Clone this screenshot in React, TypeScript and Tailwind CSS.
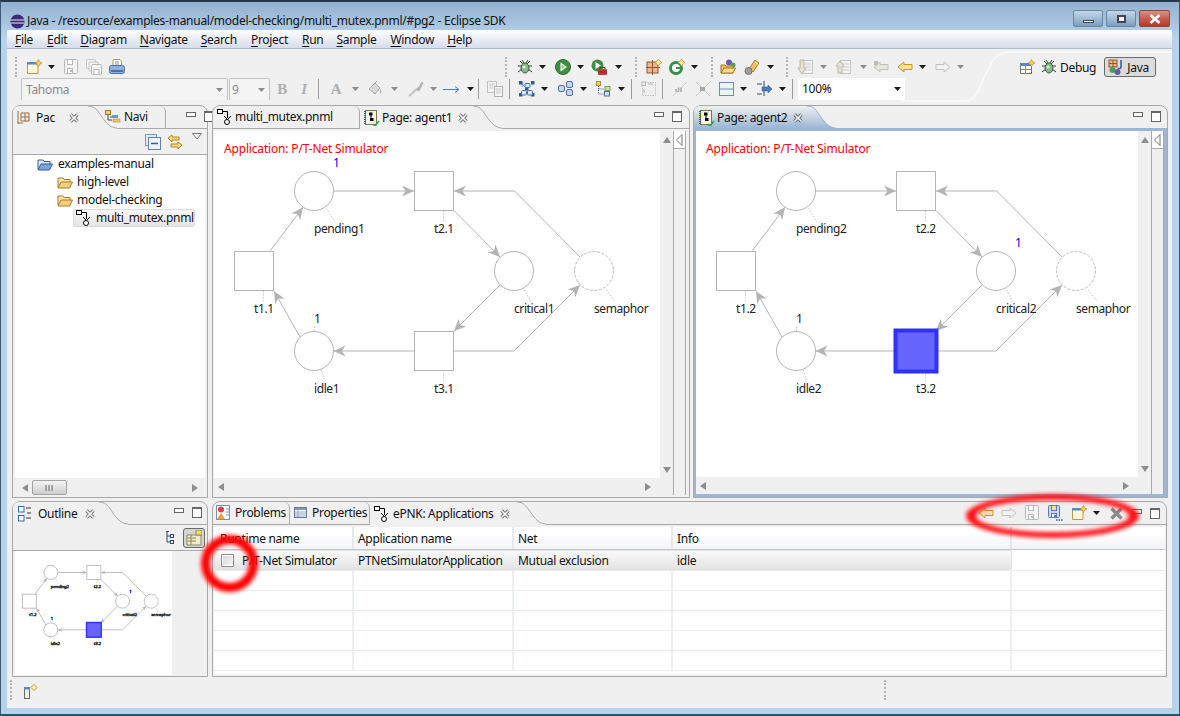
import React from "react";

type P = { className?: string };
const Ic = ({ children, className = "" }: { children: React.ReactNode; className?: string }) => (
  <svg width="16" height="16" viewBox="0 0 16 16" className={`shrink-0 ${className}`}>{children}</svg>
);
const Drop = ({ className = "", gray = false }: P & { gray?: boolean }) => (
  <svg width="7" height="4" viewBox="0 0 7 4" className={`shrink-0 ${className}`}>
    <path d="M0 0H7L3.5 4Z" fill={gray ? "#8c8c8c" : "#1a1a1a"} />
  </svg>
);
const Grip = ({ className = "" }: P) => <div className={`h-[20px] w-[2px] border-l-2 border-dotted border-[#b4b4b4] ${className}`} />;
const Sep = ({ className = "" }: P) => <div className={`h-[20px] w-px bg-[#9a9a9a] ${className}`} />;

const NewIc = ({ className = "" }: P) => (
  <Ic className={className}>
    <path d="M1.5 3.5H12V14.5H1.5Z" fill="#fdf7dc" stroke="#b89a50" />
    <rect x="1" y="3" width="11" height="2.5" fill="#5b86c0" />
    <path d="M12.5 0.5L14 3L16 4L14 5L12.5 7.5L11 5L9 4L11 3Z" fill="#f5cf4a" stroke="#b48a20" strokeWidth=".6" />
  </Ic>
);
const Floppy = ({ className = "", c = "#b8b8b8", fill = "#f4f4f4", dots = false }: P & { c?: string; fill?: string; dots?: boolean }) => (
  <Ic className={className}>
    <rect x="1.5" y="0.5" width={dots ? 11 : 13} height={dots ? 12 : 14} rx="1" fill={fill} stroke={c} />
    <rect x="4.5" y="0.5" width="5" height="5" fill={dots ? "#f4dfa0" : "#fff"} stroke={c} />
    <rect x="4.5" y={dots ? 8.5 : 9.5} width="5" height={dots ? 4 : 5} fill="#fff" stroke={c} />
    <rect x="7" y={dots ? 10 : 11} width="2" height="2" fill={c} />
    {dots && <path d="M9 15H10.5M11.5 15H13M14 15H15.5" stroke="#3a5fa0" strokeWidth="1.6" />}
  </Ic>
);
const FloppyAll = ({ className = "" }: P) => (
  <Ic className={className}>
    <rect x="0.5" y="0.5" width="9" height="9" rx="1" fill="#f4f4f4" stroke="#c4c4c4" />
    <rect x="3" y="3" width="9" height="9" rx="1" fill="#f4f4f4" stroke="#c4c4c4" />
    <rect x="5.5" y="5.5" width="10" height="10" rx="1" fill="#f4f4f4" stroke="#b4b4b4" />
    <rect x="8" y="10.5" width="5" height="5" fill="#fff" stroke="#b4b4b4" />
  </Ic>
);
const PrintIc = ({ className = "" }: P) => (
  <Ic className={className}>
    <path d="M5 .5H11L12.5 2V7H4V1Z" fill="#fff" stroke="#b09a60" />
    <rect x="0.5" y="6.5" width="15" height="8" rx="2" fill="#8fb0dc" stroke="#4a70a8" />
    <rect x="2" y="11" width="12" height="2" fill="#4a70a8" />
    <path d="M6 3H10M6 5H10" stroke="#7a90b0" />
  </Ic>
);
const Letter = ({ t, className = "", serif = true, it = false }: P & { t: string; serif?: boolean; it?: boolean }) => (
  <div className={`flex h-[16px] w-[16px] shrink-0 items-center justify-center text-[15px] font-bold text-[#aeaeae] ${className} ${serif ? "font-['Liberation_Serif',serif]" : ""} ${it ? "italic" : ""}`}>{t}</div>
);
const Bucket = ({ className = "" }: P) => (
  <Ic className={className}>
    <path d="M2 8L8 2L13 7L8 13Z" fill="#d8d8d8" stroke="#a8a8a8" />
    <path d="M13 8C15 10 15 13 14 13C13 13 12.5 10 13 8Z" fill="#bcbcbc" />
    <path d="M8 2L10 0" stroke="#a0a0a0" />
  </Ic>
);
const Pen = ({ className = "" }: P) => (
  <Ic className={className}>
    <path d="M1 15L10 7" stroke="#c4c4c4" strokeWidth="2" />
    <path d="M9 9L14 1L15 2L11 10Z" fill="#b8b8b8" stroke="#a0a0a0" strokeWidth=".6" />
  </Ic>
);
const LineArrow = ({ className = "" }: P) => (
  <svg width="17" height="16" viewBox="0 0 17 16" className={`shrink-0 ${className}`}>
    <path d="M0 8.5H15M12 5.5L16 8.5L12 11.5" stroke="#4c78c0" fill="none" />
  </svg>
);
const CopyFmt = ({ className = "" }: P) => (
  <Ic className={className}>
    <rect x=".5" y=".5" width="9" height="11" fill="#f6f6f6" stroke="#c0c0c0" />
    <rect x="7.5" y="5.5" width="8" height="10" fill="#f6f6f6" stroke="#b0b0b0" />
    <path d="M2 3H8M2 5H6M2 7H6M9 8H14M9 10H14M9 12H14" stroke="#c8c8c8" />
  </Ic>
);
const LayoutAll = ({ className = "" }: P) => (
  <Ic className={className}>
    <path d="M2 2L14 14M5 3H3V6" stroke="#88a4cc" fill="none" />
    {[[0, 0], [12, 0], [0, 12], [12, 12], [6, 6]].map(([x, y], i) => <rect key={i} x={x} y={y} width="3.5" height="3.5" fill="#2f5a96" />)}
    <rect x="2.5" y="9.5" width="5" height="4.5" rx="1" fill="#dbe6f4" stroke="#4a70a8" />
    <rect x="8.5" y="9.5" width="5" height="4.5" rx="1" fill="#dbe6f4" stroke="#4a70a8" />
    <rect x="6" y="2.5" width="5" height="4" rx="1" fill="#dbe6f4" stroke="#4a70a8" />
  </Ic>
);
const TwoBox = ({ className = "" }: P) => (
  <Ic className={className}>
    <rect x="0.5" y="4.5" width="6" height="6" rx="1.5" fill="#c8d8f0" stroke="#4a70a8" />
    <rect x="8.5" y="0.5" width="6" height="6" rx="1.5" fill="#c8d8f0" stroke="#4a70a8" />
    <rect x="8.5" y="8.5" width="6" height="6" rx="1.5" fill="#c8d8f0" stroke="#4a70a8" />
  </Ic>
);
const TreeBox = ({ className = "" }: P) => (
  <Ic className={className}>
    <rect x=".5" y=".5" width="4" height="4" fill="#f0d080" stroke="#b08a30" />
    <path d="M2.5 5V13H8M2.5 8H8" stroke="#2f5a96" strokeDasharray="1 1" fill="none" />
    <rect x="9" y="5.5" width="5" height="4" fill="#c8dca0" stroke="#80a060" />
    <rect x="8.5" y="10.5" width="5" height="4.5" fill="#d0e0f4" stroke="#4a70a8" />
  </Ic>
);
const DashBox = ({ className = "" }: P) => (
  <Ic className={className}>
    <rect x="1.5" y="1.5" width="13" height="13" fill="none" stroke="#c0c0c0" strokeDasharray="1.5 1" />
    <rect x="1" y="1" width="3.5" height="3.5" fill="#f0f0f0" stroke="#b8b8b8" />
    <path d="M7 3H12M3 8V12" stroke="#b0b0b0" />
  </Ic>
);
const Diag1 = ({ className = "" }: P) => (
  <Ic className={className}>
    <path d="M1 15L15 1" stroke="#cfcfcf" />
    <path d="M4 8V11M6.5 6.5V11M9 6.5V11" stroke="#a8a8a8" strokeWidth="1.5" />
  </Ic>
);
const Diag2 = ({ className = "" }: P) => (
  <Ic className={className}>
    <path d="M1 1L15 15M1 15L15 1" stroke="#c4c4c4" />
    <rect x="5" y="6" width="5" height="4" fill="#a8a8a8" />
  </Ic>
);
const SplitBox = ({ className = "" }: P) => (
  <Ic className={className}>
    <rect x=".5" y="1.5" width="14" height="13" fill="#eef4fb" stroke="#6a8cbc" />
    <path d="M1 8H14" stroke="#6a8cbc" />
  </Ic>
);
const Arrows = ({ className = "" }: P) => (
  <Ic className={className}>
    <path d="M0 3H5M0 13H5M7 0V15" stroke="#2f4a70" fill="none" />
    <path d="M5 6H11V4L15 8L11 12V10H5Z" fill="#4a7ab8" stroke="#2f5a96" strokeWidth=".5" />
  </Ic>
);
const Bug = ({ className = "", size = 16 }: P & { size?: number }) => (
  <svg width={size} height={size} viewBox="0 0 16 16" className={`shrink-0 ${className}`}>
    <path d="M3 2L6 5M13 2L10 5M1 7H5M15 7H11M1 13L5 10M15 13L11 10M5 1L7 4M11 1L9 4" stroke="#25452f" />
    <ellipse cx="8" cy="9" rx="4" ry="5" fill="#8ab88a" stroke="#38603f" />
    <circle cx="7" cy="8" r="1.6" fill="#d8ecd8" />
  </svg>
);
const Run = ({ className = "" }: P) => (
  <Ic className={className}>
    <circle cx="8" cy="8" r="7.5" fill="#3c9040" />
    <circle cx="8" cy="8" r="7.5" fill="none" stroke="#2a6e30" />
    <path d="M5.5 3.5L12 8L5.5 12.5Z" fill="#fff" />
    <path d="M6.5 5.5L10 8L6.5 10.5Z" fill="#8cc88c" />
  </Ic>
);
const RunExt = ({ className = "" }: P) => (
  <Ic className={className}>
    <circle cx="6.5" cy="6.5" r="6" fill="#3c9040" />
    <path d="M4.5 3L10 6.5L4.5 10Z" fill="#fff" />
    <rect x="7" y="10" width="9" height="6" rx="1" fill="#c83838" />
    <path d="M9 10V8.5H14V10M7 13H16" stroke="#8c1818" fill="none" />
  </Ic>
);
const GridStar = ({ className = "" }: P) => (
  <Ic className={className}>
    <rect x="1" y="3" width="11" height="11" fill="#e8b890" stroke="#94582c" />
    <path d="M6.5 1V16M0 8.5H14" stroke="#94582c" />
    <path d="M12.5 0L14 2L16 3.5L14 5L12.5 7L11 5L9 3.5L11 2Z" fill="#f5e6a0" stroke="#b89428" strokeWidth=".7" />
  </Ic>
);
const GStar = ({ className = "" }: P) => (
  <Ic className={className}>
    <circle cx="7" cy="9" r="5.5" fill="#fff" stroke="#389048" strokeWidth="3" />
    <path d="M7 9H12" stroke="#389048" strokeWidth="2" />
    <path d="M12.5 0L14 2L16 3.5L14 5L12.5 7L11 5L9 3.5L11 2Z" fill="#f5e6a0" stroke="#b89428" strokeWidth=".7" />
  </Ic>
);
const FolderMix = ({ className = "" }: P) => (
  <Ic className={className}>
    <circle cx="9" cy="3.5" r="3" fill="#6a5ca8" />
    <circle cx="13" cy="6" r="2.5" fill="#48a058" />
    <path d="M1 6H5L6 7H13V14H1Z" fill="#f0c068" stroke="#a87820" />
    <path d="M1 14L4 9H15.5L13 14Z" fill="#f8dc90" stroke="#a87820" />
  </Ic>
);
const Torch = ({ className = "" }: P) => (
  <Ic className={className}>
    <path d="M5 10L11 1L15 4L9 13Z" fill="#f0c060" stroke="#b08020" />
    <path d="M11 3L14 5" stroke="#fff" />
    <circle cx="4.5" cy="12" r="3.5" fill="#a0a0a0" stroke="#707070" />
  </Ic>
);
const NavDown = ({ className = "", up = false }: P & { up?: boolean }) => (
  <Ic className={className}>
    <rect x="5.5" y="1.5" width="10" height="13" fill="#f4f4f4" stroke="#c4c4c4" />
    <path d="M8 5H14M8 8H14M8 11H14" stroke="#c8c8c8" />
    {up ? <path d="M1 7L5 2L9 7H7V14H3V7Z" fill="#e6e2d2" stroke="#b8b6a8" /> : <path d="M3 1H7V9H9L5 15L1 9H3Z" fill="#e6e2d2" stroke="#b8b6a8" />}
  </Ic>
);
const ArrowL = ({ className = "", c = "#f8e0a0", s = "#c89818", dot = false }: P & { c?: string; s?: string; dot?: boolean }) => (
  <Ic className={className}>
    <path d="M1 8L7 3V5.5H15V10.5H7V13Z" fill={c} stroke={s} />
    {dot && <rect x="1" y="2" width="4" height="4" fill="#bbb" />}
  </Ic>
);
const ArrowR = ({ className = "" }: P) => (
  <Ic className={className}>
    <path d="M15 8L9 3V5.5H1V10.5H9V13Z" fill="#f2f2f2" stroke="#c0c0c0" />
  </Ic>
);
const NewPersp = ({ className = "" }: P) => (
  <Ic className={className}>
    <rect x="1.5" y="4.5" width="11" height="10" fill="#fff" stroke="#7a7a50" />
    <rect x="1" y="4" width="12" height="3" fill="#5b86c0" />
    <path d="M6.5 7V15M2 10.5H12" stroke="#888" />
    <path d="M12.5 0.5L14 3L16 4L14 5L12.5 7.5L11 5L9 4L11 3Z" fill="#f5cf4a" stroke="#b48a20" strokeWidth=".6" />
  </Ic>
);
const JavaP = ({ className = "" }: P) => (
  <Ic className={className}>
    <rect x="1" y="1" width="8" height="7" fill="#e8b890" stroke="#94582c" />
    <path d="M5 1V8M1 4.5H9" stroke="#94582c" />
    <circle cx="4.5" cy="11" r="3" fill="#48a058" />
    <circle cx="9.5" cy="13" r="3" fill="#6a5ca8" />
    <path d="M13 1V8C13 10 11 10 10 9" stroke="#2f5a96" strokeWidth="1.5" fill="none" />
  </Ic>
);

const FileIc = ({ className = "" }: P) => (
  <Ic className={className}>
    <rect x="0.5" y="0.5" width="5" height="4" fill="#fff" stroke="#000" />
    <path d="M5.5 2.5H10.5V9M7 7L10.5 10.5L14 7" fill="none" stroke="#000" />
    <circle cx="10" cy="13" r="2.5" fill="#fff" stroke="#000" />
  </Ic>
);
const PageIc = ({ className = "" }: P) => (
  <Ic className={className}>
    <rect x="1.5" y="0.5" width="11" height="14" fill="#f6f4e4" stroke="#7a7a40" />
    <path d="M1 1V15" stroke="#2f5a96" strokeWidth="2" strokeDasharray="1 1" />
    <rect x="5" y="2.5" width="3.5" height="3" fill="#000" />
    <rect x="6" y="8" width="3.5" height="3" fill="#000" />
    <path d="M7 5V8" stroke="#000" />
    <path d="M9 14L11 16L15 11" stroke="#38a048" strokeWidth="1.6" fill="none" />
  </Ic>
);
const PacIc = ({ className = "" }: P) => (
  <Ic className={className}>
    <path d="M2 1V14M5 3H13V11H5ZM9 3V11M5 7H13M2 13H7" stroke="#9c6a38" fill="none" />
  </Ic>
);
const NaviIc = ({ className = "" }: P) => (
  <Ic className={className}>
    <rect x=".5" y="1.5" width="5" height="4" fill="#f0d080" stroke="#9c7a20" />
    <path d="M3 6V11H7M5 8H9" stroke="#444" fill="none" />
    <rect x="7" y="6" width="6" height="3" fill="#7098c8" />
    <rect x="8" y="10" width="7" height="3" fill="#f0c868" stroke="#9c7a20" strokeWidth=".5" />
  </Ic>
);
const OutlineIc = ({ className = "" }: P) => (
  <Ic className={className}>
    <rect x=".5" y=".5" width="5.5" height="5.5" fill="#fff" stroke="#2f6ab8" />
    <rect x=".5" y="9.5" width="5.5" height="5.5" fill="#fff" stroke="#2f6ab8" />
    <path d="M8 2H13M9 7H13M8 12H13" stroke="#333" />
  </Ic>
);
const ProblemsIc = ({ className = "" }: P) => (
  <Ic className={className}>
    <rect x=".5" y=".5" width="13" height="14" fill="#fff" stroke="#8090b0" />
    <circle cx="5" cy="4.5" r="3" fill="#e04040" />
    <path d="M5 8L9 14H1Z" fill="#f0a030" />
    <path d="M10 4H13M10 7H13M10 10H13" stroke="#8090b0" />
  </Ic>
);
const PropsIc = ({ className = "" }: P) => (
  <Ic className={className}>
    <rect x=".5" y="2.5" width="12" height="10" fill="#fff" stroke="#5f7f9f" />
    <rect x="1" y="3" width="11" height="2" fill="#7a9ac0" />
    <path d="M1 7H12M1 9H12M1 11H12M4 5V12" stroke="#90a8c0" />
  </Ic>
);
const Close = ({ className = "", strong = false }: P & { strong?: boolean }) => (
  <svg width="10" height="10" viewBox="0 0 10 10" className={`shrink-0 ${className}`}>
    <path d="M1.5 1.5L8.5 8.5M8.5 1.5L1.5 8.5" stroke={strong ? "#55606e" : "#6e6e6e"} strokeWidth="3.2" />
    <path d="M1.5 1.5L8.5 8.5M8.5 1.5L1.5 8.5" stroke="#fff" strokeWidth="1.6" />
  </svg>
);
const MinMax = ({ className = "" }: P) => (
  <div className={`flex shrink-0 items-start gap-[8px] ${className}`}>
    <div className="mt-[1px] h-[5px] w-[10px] border border-[#666] bg-white" />
    <div className="h-[11px] w-[10px] border border-[#666] border-t-2 bg-white" />
  </div>
);
const Curve = ({ blue = false, className = "" }: P & { blue?: boolean }) => (
  <svg width="32" height="23" viewBox="0 0 32 23" className={`-mb-px shrink-0 ${className}`}>
    <defs>
      <linearGradient id="tabg" x1="0" x2="0" y1="0" y2="1">
        <stop offset="0" stopColor="#f0f0f0" />
        <stop offset="1" stopColor="#99b4d3" />
      </linearGradient>
    </defs>
    <path d="M0 23V0H3C12 0 14 8 20 15C24 20 28 22 32 22V23Z" fill={blue ? "url(#tabg)" : "#f0f0f0"} />
    <path d="M3 0C12 0 14 8 20 15C24 20 28 22 32 22" fill="none" stroke={blue ? "#9bb2cc" : "#a9a9a9"} />
  </svg>
);

const font = "font-['Noto_Sans',sans-serif] tracking-[-0.3px]";

const Marker = ({ id }: { id: string }) => (
  <defs>
    <marker id={id} markerUnits="userSpaceOnUse" markerWidth="14" markerHeight="14" refX="12" refY="7" orient="auto">
      <path d="M0 1.5L12 7L0 12.5L3.5 7Z" fill="#b4b4b4" />
    </marker>
  </defs>
);

function Net({ n, hot, token, id, viewBox, mini = false, className = "" }: { n: string; hot?: boolean; token: "pending" | "critical"; id: string; viewBox?: string; mini?: boolean; className?: string }) {
  const s = "#b4b4b4";
  const m = `url(#${id})`;
  const sw = mini ? 2.4 : 1;
  const Lbl = ({ x, y, t, fill = "#222" }: { x: number; y: number; t: string; fill?: string }) => (
    <text x={x} y={y} fill={fill} fontSize="12" letterSpacing="-0.4" stroke={mini ? fill : undefined} strokeWidth={mini ? 1.2 : undefined}>{t}</text>
  );
  const Circle = ({ cx, cy, dash }: { cx: number; cy: number; dash?: boolean }) => (
    <circle cx={cx} cy={cy} r="19.5" fill="#fff" strokeWidth={sw} stroke={dash ? "#bcbcbc" : s} strokeDasharray={dash && !mini ? "3 1.5" : undefined} />
  );
  return (
    <svg viewBox={viewBox} className={`block font-['Noto_Sans',sans-serif] ${className}`}>
      <Marker id={id} />
      <g fill="none" stroke={s} strokeWidth={sw}>
        <path d="M119.5 60H200" markerEnd={m} />
        <path d="M240 79.5L286 126" markerEnd={m} />
        <path d="M286 154L240 200" markerEnd={m} />
        <path d="M200 220H119.5" markerEnd={m} />
        <path d="M86 206L60 160" markerEnd={m} />
        <path d="M56.3 119.7L89 76.3" markerEnd={m} />
        <path d="M366 126L300.7 60H240" markerEnd={m} />
        <path d="M240 220H300L366 154" markerEnd={m} />
      </g>
      <g stroke="#c4c4c4" strokeWidth={sw} strokeDasharray="1.5 1.5" fill="none">
        <path d="M112.3 77.3L120.7 90.7M229.5 79.5V90M310.7 159L316.7 170.7M392.3 159L401.3 170.7M49.5 160V170M107.3 239L110.7 250.7M100.5 200V194M229.5 243V250" />
      </g>
      <Circle cx={100} cy={60} />
      <Circle cx={300} cy={140} />
      <Circle cx={380} cy={140} dash />
      <Circle cx={100} cy={220} />
      <rect x="200.5" y="40.5" width="39" height="39" fill="#fff" stroke={s} strokeWidth={sw} />
      <rect x="20.5" y="120.5" width="39" height="39" fill="#fff" stroke={s} strokeWidth={sw} />
      {hot ? (
        <rect x="199.5" y="199.5" width="41" height="41" fill="#6666ff" stroke="#3030ff" strokeWidth="4" />
      ) : (
        <rect x="200.5" y="200.5" width="39" height="39" fill="#fff" stroke={s} />
      )}
      {!mini && <text x="10" y="22" fill="#ff0000" fontSize="12" letterSpacing="-0.17">Application: P/T-Net Simulator</text>}
      <Lbl x={100} y={102} t={`pending${n}`} />
      <Lbl x={220} y={102} t={`t2.${n}`} />
      <Lbl x={300} y={182} t={`critical${n}`} />
      <Lbl x={380} y={182} t="semaphor" />
      <Lbl x={40} y={182} t={`t1.${n}`} />
      <Lbl x={100} y={192} t="1" />
      <Lbl x={100} y={262} t={`idle${n}`} />
      <Lbl x={220} y={262} t={`t3.${n}`} />
      {token === "pending" ? <Lbl x={119} y={36} t="1" fill="#0000ff" /> : <Lbl x={319} y={116} t="1" fill="#0000ff" />}
    </svg>
  );
}

const Tri = ({ d, className = "" }: P & { d: "l" | "r" | "u" | "d" }) => {
  const p = { l: "M7 0V8L1 4Z", r: "M1 0V8L7 4Z", u: "M0 7H8L4 1Z", d: "M0 1H8L4 7Z" }[d];
  return (
    <svg width="8" height="8" viewBox="0 0 8 8" className={`shrink-0 ${className}`}>
      <path d={p} fill="#8e8e8e" />
    </svg>
  );
};

function EditorBody({ n, hot, token, id }: { n: string; hot?: boolean; token: "pending" | "critical"; id: string }) {
  return (
    <div className="flex min-h-0 flex-1">
      <div className="flex min-w-0 flex-1 flex-col">
        <Net n={n} hot={hot} token={token} id={id} className="min-h-0 w-full flex-1 bg-white" />
        <div className="flex h-[17px] shrink-0 items-center justify-between bg-[#f0f0f0] pl-[3px] pr-[8px]">
          <Tri d="l" />
          <Tri d="r" />
        </div>
      </div>
      <div className="flex w-[13px] shrink-0 flex-col items-center justify-between bg-[#f0f0f0] pb-[21px] pt-[5px]">
        <Tri d="u" />
        <Tri d="d" />
      </div>
      <div className="w-[13px] shrink-0 border-x border-[#a9a9a9] bg-[#f0f0f0]">
        <div className="flex h-[18px] items-center justify-center border-b border-[#a9a9a9] bg-white">
          <svg width="7" height="12" viewBox="0 0 7 12"><path d="M6 .5V11.5L.5 6Z" fill="#fff" stroke="#777" /></svg>
        </div>
      </div>
    </div>
  );
}

const Header = ({ children, blue = false }: { children: React.ReactNode; blue?: boolean }) => (
  <div className={`flex h-[23px] shrink-0 items-stretch border-b ${blue ? "border-[#9bb6d6]" : "border-[#a9a9a9]"}`}>{children}</div>
);
const ActiveTab = ({ icon, label, blue = false, className = "", closeCls = "" }: { icon: React.ReactNode; label: string; blue?: boolean; className?: string; closeCls?: string }) => (
  <>
    <div className={`-mb-px flex h-[23px] shrink-0 items-center rounded-tl-[6px] ${blue ? "bg-gradient-to-b from-[#f0f0f0] to-[#99b4d3]" : "bg-[#f0f0f0]"} ${className}`}>
      {icon}
      <span className="whitespace-nowrap">{label}</span>
      <Close strong={blue} className={closeCls} />
    </div>
    <Curve blue={blue} />
  </>
);
const InactiveTab = ({ icon, label, className = "" }: { icon: React.ReactNode; label: string; className?: string }) => (
  <div className={`flex shrink-0 items-center rounded-tr-[6px] border-r border-[#a9a9a9] ${className}`}>
    {icon}
    <span className="whitespace-nowrap">{label}</span>
  </div>
);

const cols = ["w-[140px]", "w-[160px]", "w-[159px]", "w-[339px]", "flex-1"];
const TableHeader = () => (
  <div className="flex h-[23px] shrink-0 border-b border-[#c8c8c8] bg-gradient-to-b from-white from-30% to-[#f2f3f6]">
    {["Runtime name", "Application name", "Net", "Info", ""].map((t, i) => (
      <div key={i} className={`${cols[i]} border-r-2 border-[#e8e8ea] ${i === 0 ? "pl-[6px]" : "pl-[4px]"} flex items-center pt-[2px] last:border-r-0`}>{t}</div>
    ))}
  </div>
);
const TableRow = () => (
  <div className="flex h-[20px] shrink-0 border-b border-[#ececec]">
    {cols.map((c, i) => <div key={i} className={`${c} border-r-2 border-[#edf0f3] last:border-r-0`} />)}
  </div>
);

const tool = "flex h-[22px] items-center";

export default function App() {
  return (
    <div className={`relative flex h-[716px] w-[1180px] flex-col overflow-hidden border-x border-b-2 border-t-2 border-b-[#1a5a6a] border-x-[#3a5a78] border-t-[#27384a] bg-gradient-to-b from-[#93b1cf] from-0% to-[#b7d2eb] to-[5%] pb-[6px] pl-[6px] pr-[7px] pt-[28px] text-[12px] text-[#111] ${font}`}>
      {/* title bar */}
      <div className="absolute left-[9px] top-[10px] flex items-center gap-[1px]">
        <svg width="15" height="15" viewBox="0 0 15 15">
          <circle cx="7.5" cy="7.5" r="7" fill="#3a2a78" />
          <path d="M0.5 6H14.5M1 9H14" stroke="#f0f0f8" strokeWidth="1.2" />
        </svg>
        <span className="ml-[1px] whitespace-nowrap tracking-[-0.27px] text-[#111]">Java - /resource/examples-manual/model-checking/multi_mutex.pnml/#pg2 - Eclipse SDK</span>
      </div>
      <div className="absolute right-[9px] top-[8px] flex gap-[3px]">
        <div className="flex h-[17px] w-[30px] items-center justify-center rounded-[2px] border border-[#6a86a4] bg-gradient-to-b from-[#c3d5e8] via-[#a2bcd6] to-[#7f9dbd]"><div className="mt-[5px] h-[3px] w-[11px] border border-[#445] bg-white" /></div>
        <div className="flex h-[17px] w-[30px] items-center justify-center rounded-[2px] border border-[#6a86a4] bg-gradient-to-b from-[#c3d5e8] via-[#a2bcd6] to-[#7f9dbd]"><div className="h-[8px] w-[9px] border-2 border-[#445] bg-white" /></div>
        <div className="flex h-[17px] w-[31px] items-center justify-center rounded-[2px] border border-[#8a4a44] bg-gradient-to-b from-[#dc8f84] via-[#c75f50] to-[#b03828]">
          <svg width="12" height="10" viewBox="0 0 12 10"><path d="M1.5 1L10.5 9M10.5 1L1.5 9" stroke="#fff" strokeWidth="2.6" /></svg>
        </div>
      </div>

      {/* menu */}
      <div className="flex h-[19px] shrink-0 items-center border-b border-[#b4bccc] bg-gradient-to-b from-white to-[#d6dcec] pt-[2px]">
        {[["File", "ml-[8px]"], ["Edit", "ml-[14px]"], ["Diagram", "ml-[13px]"], ["Navigate", "ml-[13px]"], ["Search", "ml-[13px]"], ["Project", "ml-[14px]"], ["Run", "ml-[14px]"], ["Sample", "ml-[13px]"], ["Window", "ml-[14px]"], ["Help", "ml-[13px]"]].map(([t, c]) => (
          <span key={t} className={c}>
            <span className="underline decoration-[#111] underline-offset-2">{t[0]}</span>{t.slice(1)}
          </span>
        ))}
      </div>

      {/* toolbar */}
      <div className="relative flex h-[56px] shrink-0 flex-col bg-[#f0f0f0] pt-[7px]">
        <svg width="270" height="56" viewBox="0 0 270 56" className="absolute right-0 top-0">
          <path d="M0 52H62C76 52 78 36 86 20C92 8 96 3 110 3H270" fill="none" stroke="#fff" />
        </svg>
        <div className={`${tool} relative`}>
          <Grip className="ml-[8px]" />
          <NewIc className="ml-[9px]" /><Drop className="ml-[6px]" />
          <Floppy className="ml-[8px]" /><FloppyAll className="ml-[7px]" /><PrintIc className="ml-[7px]" />
          <Grip className="ml-[380px]" />
          <Bug className="ml-[10px]" /><Drop className="ml-[6px]" />
          <Run className="ml-[9px]" /><Drop className="ml-[6px]" />
          <RunExt className="ml-[7px]" /><Drop className="ml-[8px]" />
          <Grip className="ml-[13px]" />
          <GridStar className="ml-[9px]" /><GStar className="ml-[7px]" /><Drop className="ml-[6px]" />
          <Grip className="ml-[13px]" />
          <FolderMix className="ml-[7px]" /><Torch className="ml-[8px]" /><Drop className="ml-[7px]" />
          <Grip className="ml-[12px]" />
          <NavDown className="ml-[9px]" /><Drop gray className="ml-[7px]" />
          <NavDown up className="ml-[8px]" /><Drop gray className="ml-[9px]" />
          <ArrowL dot c="#e6e6de" s="#c0c0b8" className="ml-[6px]" />
          <ArrowL className="ml-[8px]" /><Drop className="ml-[6px]" />
          <ArrowR className="ml-[9px]" /><Drop gray className="ml-[6px]" />
          <NewPersp className="ml-[55px]" />
          <Bug className="ml-[6px]" />
          <span className="ml-[3px] pt-px">Debug</span>
          <div className="ml-[8px] flex h-[20px] w-[52px] items-center gap-[3px] rounded-[3px] border border-[#6a6a6a] bg-[#dcdcdc] pl-[3px]">
            <JavaP /><span className="pt-px">Java</span>
          </div>
        </div>
        <div className={tool}>
          <div className="ml-[14px] flex h-[22px] w-[207px] shrink-0 items-center justify-between rounded-t-[2px] border border-b-0 border-[#c4c4c4] bg-[#f4f4f4] pl-[4px] pr-[4px] text-[#8a8a8a]">Tahoma<Drop gray /></div>
          <div className="ml-[1px] flex h-[22px] w-[41px] shrink-0 items-center justify-between rounded-t-[2px] border border-b-0 border-[#c4c4c4] bg-[#f4f4f4] pl-[2px] pr-[4px] text-[#8a8a8a]">9<Drop gray /></div>
          <Letter t="B" className="ml-[4px]" />
          <Letter t="I" it className="ml-[6px]" />
          <Sep className="ml-[6px]" />
          <Letter t="A" className="ml-[9px]" />
          <Drop gray className="ml-[8px]" />
          <Bucket className="ml-[8px]" /><Drop gray className="ml-[8px]" />
          <Pen className="ml-[10px]" /><Drop gray className="ml-[6px]" />
          <LineArrow className="ml-[6px]" /><Drop className="ml-[7px]" />
          <Sep className="ml-[4px]" />
          <CopyFmt className="ml-[8px]" />
          <Sep className="ml-[6px]" />
          <LayoutAll className="ml-[9px]" /><Drop className="ml-[6px]" />
          <TwoBox className="ml-[10px]" /><Drop className="ml-[6px]" />
          <TreeBox className="ml-[9px]" /><Drop className="ml-[6px]" />
          <Sep className="ml-[6px]" />
          <DashBox className="ml-[9px]" />
          <Sep className="ml-[5px]" />
          <Diag1 className="ml-[9px]" /><Diag2 className="ml-[7px]" />
          <SplitBox className="ml-[8px]" /><Drop className="ml-[5px]" />
          <Arrows className="ml-[10px]" /><Drop className="ml-[6px]" />
          <Sep className="ml-[6px]" />
          <div className="relative ml-[5px] flex h-[22px] w-[107px] shrink-0 items-center justify-between rounded-t-[2px] bg-white pl-[4px] pr-[4px]">100%<Drop /></div>
        </div>
      </div>

      {/* work area */}
      <div className="flex min-h-0 flex-1 flex-col bg-[#f0f0f0] px-[5px]">
        <div className="flex h-[393px] shrink-0">
          <div className="flex w-[196px] shrink-0 flex-col rounded-t-[8px] border border-[#a9a9a9] bg-[#f0f0f0]">
            <Header>
              <ActiveTab icon={<PacIc className="ml-[3px] mr-[4px]" />} label="Pac" closeCls="ml-[14px]" className="w-[72px]" />
              <div className="-ml-[13px] flex w-[62px] shrink-0 items-center rounded-tr-[6px] border-r border-[#a9a9a9] pl-[1px]"><NaviIc className="mr-[3px]" />Navi</div>
              <MinMax className="ml-[20px] mt-[5px]" />
            </Header>
            <div className="flex h-[26px] shrink-0 items-center justify-end border-b border-[#a9a9a9] pr-[5px]">
              <svg width="16" height="16" viewBox="0 0 16 16" className="mr-[6px]">
                <rect x=".5" y=".5" width="11" height="11" fill="#dfe9f5" stroke="#7a9ac8" />
                <rect x="3.5" y="3.5" width="12" height="12" fill="#f0f5fb" stroke="#5a84b8" />
                <path d="M6 9.5H13" stroke="#2c5f98" strokeWidth="1.5" />
              </svg>
              <svg width="16" height="16" viewBox="0 0 16 16" className="mr-[9px]">
                <path d="M1 4L5 1V3H12V6H5V8Z" fill="#f5d98a" stroke="#b08a20" />
                <path d="M15 11L11 8V10H4V13H11V15Z" fill="#f5d98a" stroke="#b08a20" />
              </svg>
              <svg width="10" height="7" viewBox="0 0 10 7" className="mb-[10px]"><path d="M.5 .5H9.5L5 6Z" fill="#f4f4f4" stroke="#777" /></svg>
            </div>
            <div className="mx-[2px] min-h-0 flex-1 bg-white pl-[22px]">
              <div className="flex h-[18px] items-center"><Folder blue /><span className="ml-[5px]">examples-manual</span></div>
              <div className="ml-[20px] flex h-[18px] items-center"><Folder /><span className="ml-[4px]">high-level</span></div>
              <div className="ml-[20px] flex h-[18px] items-center"><Folder /><span className="ml-[4px]">model-checking</span></div>
              <div className="ml-[36px] flex h-[18px] w-[122px] items-center rounded-[2px] border border-[#dcdcdc] bg-gradient-to-b from-[#f8f8f8] to-[#e4e4e4] pl-[2px]"><FileIc /><span className="ml-[4px]">multi_mutex.pnml</span></div>
            </div>
            <div className="flex h-[19px] shrink-0 items-center bg-[#f0f0f0] px-[8px]">
              <Tri d="l" />
              <div className="ml-[3px] flex h-[15px] w-[35px] items-center justify-center rounded-[2px] border border-[#a4a4a4] bg-gradient-to-b from-[#f4f4f4] to-[#cfcfcf]">
                <svg width="9" height="6" viewBox="0 0 9 6"><path d="M1 0V6M4 0V6M7 0V6" stroke="#666" /></svg>
              </div>
              <Tri d="r" className="ml-auto" />
            </div>
          </div>

          <div className="ml-[4px] flex w-[478px] shrink-0 flex-col rounded-t-[8px] border border-[#a9a9a9] bg-[#f0f0f0]">
            <Header>
              <InactiveTab icon={<FileIc className="ml-[4px] mr-[2px]" />} label="multi_mutex.pnml" className="w-[147px]" />
              <ActiveTab icon={<PageIc className="ml-[4px] mr-[2px]" />} label="Page: agent1" closeCls="ml-[6px]" className="w-[110px]" />
              <MinMax className="ml-auto mr-[7px] mt-[5px]" />
            </Header>
            <div className="mt-[2px] flex min-h-0 flex-1 pl-px pr-[3px]">
              <EditorBody n="1" token="pending" id="m1" />
            </div>
            <div className="h-[2px] shrink-0" />
          </div>

          <div className="ml-[3px] flex w-[475px] shrink-0 flex-col rounded-t-[8px] border border-[#a9a9a9] bg-[#f0f0f0]">
            <Header blue>
              <ActiveTab blue icon={<PageIc className="ml-[5px] mr-[2px]" />} label="Page: agent2" closeCls="ml-[6px]" className="w-[110px]" />
              <MinMax className="ml-auto mr-[6px] mt-[5px]" />
            </Header>
            <div className="flex min-h-0 flex-1 border-y-[2px] border-b-[3px] border-l-[2px] border-r-[3px] border-[#9bb6d6]">
              <EditorBody n="2" hot token="critical" id="m2" />
            </div>
          </div>
        </div>

        <div className="mt-[3px] flex h-[176px] shrink-0">
          <div className="flex w-[196px] shrink-0 flex-col rounded-t-[8px] border border-[#a9a9a9] bg-[#f0f0f0]">
            <Header>
              <ActiveTab icon={<OutlineIc className="ml-[5px] mr-[4px]" />} label="Outline" closeCls="ml-[8px]" className="w-[83px]" />
              <MinMax className="ml-auto mr-[5px] mt-[5px]" />
            </Header>
            <div className="flex h-[26px] shrink-0 items-center justify-end border-b border-[#a9a9a9] pr-[2px]">
              <svg width="10" height="13" viewBox="0 0 10 13" className="mr-[8px]"><path d="M1 .5H4M2 1V11M2 5H5M2 11H5" stroke="#2f4a70" fill="none" /><rect x="5.5" y="3.5" width="3" height="3" fill="#fff" stroke="#2f4a70" /><rect x="5.5" y="9.5" width="3" height="3" fill="#fff" stroke="#2f4a70" /></svg>
              <div className="flex h-[20px] w-[22px] items-center justify-center rounded-[3px] border border-[#6a6a6a] bg-[#d4d4d4]">
                <Ic><path d="M1 5H15V15H1Z" fill="#f0ecc8" stroke="#8a8a60" /><path d="M2 8H10M2 11H10M5 5V15" stroke="#8a8a60" /><rect x="10" y="0" width="6" height="5" fill="#f5dd60" stroke="#8a8a60" /></Ic>
              </div>
            </div>
            <div className="mx-[2px] min-h-0 flex-1">
              <Net mini n="2" hot token="critical" id="m3" viewBox="0 0 438 346" className="h-[124px] w-[157px] bg-white" />
            </div>
          </div>

          <div className="ml-[4px] flex min-w-0 flex-1 flex-col rounded-t-[8px] border border-[#a9a9a9] bg-[#f0f0f0]">
            <Header>
              <InactiveTab icon={<ProblemsIc className="ml-[3px] mr-[3px]" />} label="Problems" className="w-[77px]" />
              <InactiveTab icon={<PropsIc className="ml-[4px] mr-[2px]" />} label="Properties" className="w-[80px]" />
              <ActiveTab icon={<FileIc className="ml-[4px] mr-[3px]" />} label="ePNK: Applications" closeCls="ml-[7px]" className="w-[144px]" />
              <div className="ml-auto mr-[6px] flex items-center">
                <ArrowL />
                <ArrowR className="ml-[7px]" />
                <Floppy className="ml-[7px]" />
                <Floppy dots c="#5a7ab0" fill="#c8d8f0" className="ml-[7px]" />
                <NewIc className="ml-[8px]" />
                <Drop className="ml-[6px]" />
                <svg width="13" height="13" viewBox="0 0 13 13" className="ml-[10px]"><path d="M1.5 1.5L11.5 11.5M11.5 1.5L1.5 11.5" stroke="#8c8c8c" strokeWidth="3.4" /></svg>
                <MinMax className="ml-[9px]" />
              </div>
            </Header>
            <div className="mx-px mt-[2px] mb-[2px] flex min-h-0 flex-1 flex-col overflow-hidden bg-white">
              <TableHeader />
              <div className="flex h-[21px] shrink-0 border-b border-[#ececec]">
                <div className="flex w-[798px] items-center rounded-[2px] border border-[#e0e0e0] bg-gradient-to-b from-[#fafafa] to-[#e4e4e4] pt-[2px]">
                  <div className="-mt-[2px] ml-[6px] h-[13px] w-[13px] shrink-0 rounded-[1px] border border-[#8a8a8a] bg-gradient-to-br from-[#d4d4d4] to-[#fafafa] shadow-[inset_0_0_0_1px_#fff]" />
                  <span className="ml-[8px] w-[112px] shrink-0 whitespace-nowrap">P/T-Net Simulator</span>
                  <span className="w-[160px] shrink-0 pl-[4px]">PTNetSimulatorApplication</span>
                  <span className="w-[159px] shrink-0 pl-[4px]">Mutual exclusion</span>
                  <span className="pl-[4px]">idle</span>
                </div>
              </div>
              <TableRow /><TableRow /><TableRow /><TableRow /><TableRow />
            </div>
          </div>
        </div>

        <div className="flex h-[30px] shrink-0 items-start pt-[2px]">
          <Grip className="ml-[-2px] mt-[1px]" />
          <svg width="16" height="16" viewBox="0 0 16 16" className="ml-[11px] mt-[5px]">
            <rect x="1.5" y="3.5" width="5" height="11" fill="#e8f0e8" stroke="#6a6a6a" />
            <rect x="1" y="3" width="6" height="2.5" fill="#5b86c0" />
            <path d="M11 .5L14 3.5L11 6.5L8 3.5Z" fill="#f8f0c0" stroke="#c89818" />
          </svg>
          <Grip className="ml-[845px] mt-[1px]" />
        </div>
      </div>

      {/* hand-drawn highlights lying over the window */}
      <div className="absolute left-[200px] top-[533px] h-[57px] w-[57px] rounded-full border-[9px] border-[#ff0000] blur-[2px]" />
      <div className="absolute left-[965px] top-[492px] h-[44px] w-[173px] rounded-[50%] border-x-[10px] border-y-[6px] border-[#ff0f14] blur-[2px]" />
    </div>
  );
}

function Folder({ blue = false }: { blue?: boolean }) {
  return (
    <svg width="16" height="13" viewBox="0 0 16 13" className="shrink-0">
      <path d="M1 2H6L7 3.5H13V11H1Z" fill={blue ? "#d8e4f4" : "#fbe6b0"} stroke={blue ? "#3a5f98" : "#a87a28"} />
      <path d="M1 12L4 6H15.5L12.5 12Z" fill={blue ? "#7ba4dc" : "#f8cf80"} stroke={blue ? "#3a5f98" : "#a87a28"} />
    </svg>
  );
}
